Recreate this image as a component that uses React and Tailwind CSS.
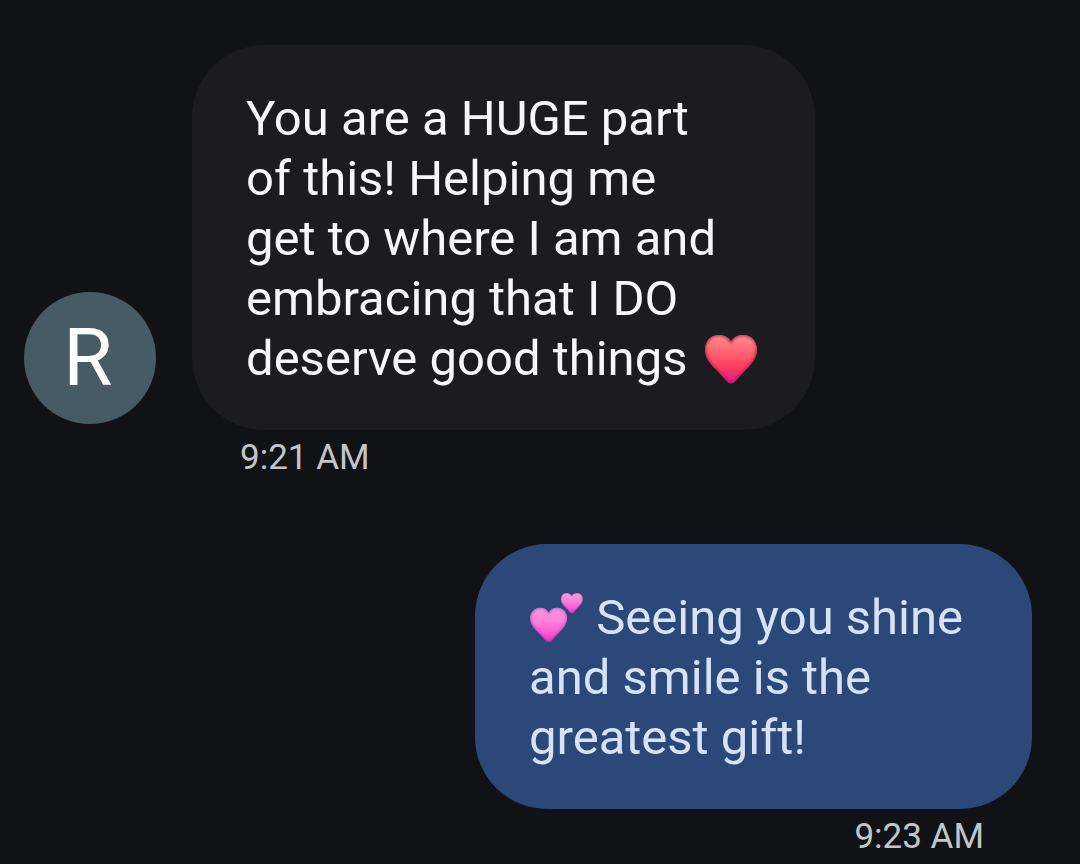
import React from "react";

const HEART =
  "M27 7.5C24 3 20 1 15 1C7 1 1 7 1 15.5C1 22.500 5 28.500 11 34.500C15.500 39 19.500 43.500 23 47.500C25.500 50 28.500 50 31 47.500C34.500 43.500 38.500 39 43 34.500C49 28.500 53 22.500 53 15.500C53 7 47 1 39 1C34 1 30 3 27 7.500Z";

// Glossy red heart, drawn inline with the message text
function RedHeart() {
  return (
    <svg
      role="img"
      aria-label="red heart"
      viewBox="0 0 54 56"
      className="-my-2 ml-1 inline-block h-[56px] w-[54px] align-middle"
    >
      <defs>
        <linearGradient id="red" x1="0" y1="0" x2="0" y2="1">
          <stop offset="0" stopColor="#ff908e" />
          <stop offset="0.3" stopColor="#ff6a76" />
          <stop offset="0.6" stopColor="#ff4460" />
          <stop offset="0.8" stopColor="#f42c70" />
          <stop offset="1" stopColor="#cc18a0" />
        </linearGradient>
        <clipPath id="redClip">
          <path d={HEART} />
        </clipPath>
        <filter id="redSoft">
          <feGaussianBlur stdDeviation="1.2" />
        </filter>
      </defs>
      <path d={HEART} fill="url(#red)" />
      <g clipPath="url(#redClip)">
        <path d={HEART} fill="none" stroke="#b8183f" strokeOpacity="0.7" strokeWidth="3" filter="url(#redSoft)" />
      </g>
    </svg>
  );
}

// Big pink heart with a small one at its upper right
function TwoHearts() {
  return (
    <svg
      role="img"
      aria-label="two hearts"
      viewBox="0 0 55 58"
      className="-my-2 inline-block h-[58px] w-[55px] align-middle"
    >
      <defs>
        <linearGradient id="pink" x1="0" y1="0" x2="0" y2="1">
          <stop offset="0" stopColor="#f09ae0" />
          <stop offset="0.4" stopColor="#ff80de" />
          <stop offset="0.75" stopColor="#ff58d2" />
          <stop offset="1" stopColor="#e82fbd" />
        </linearGradient>
        <clipPath id="pinkClip">
          <path d={HEART} />
        </clipPath>
        <filter id="pinkSoft">
          <feGaussianBlur stdDeviation="1.2" />
        </filter>
        <g id="pinkHeart">
          <path d={HEART} fill="url(#pink)" />
          <g clipPath="url(#pinkClip)">
            <path d={HEART} fill="none" stroke="#9a38b0" strokeOpacity="0.6" strokeWidth="3" filter="url(#pinkSoft)" />
          </g>
        </g>
      </defs>
      <use href="#pinkHeart" transform="translate(0.5 15) scale(0.71)" />
      <use href="#pinkHeart" transform="translate(31.500 0.500) scale(0.420)" />
    </svg>
  );
}

export default function App() {
  return (
    <main className="flex min-h-screen flex-col bg-[#111216] pt-[45px] font-['Roboto',sans-serif]">
      {/* Received message */}
      <div className="flex items-end gap-9 pl-6">
        <div className="mb-[6px] flex size-[132px] shrink-0 items-center justify-center rounded-full bg-[#475b65] pr-1 text-[80px] leading-none text-white">
          R
        </div>
        <p className="w-full max-w-[623px] rounded-[72px] bg-[#1c1b1f] px-[54px] pt-[44px] pb-[41px] text-[49px] leading-[60px] whitespace-nowrap text-[#f8f6fd]">
          You are a HUGE part
          <br />
          of this! Helping me
          <br />
          get to where I am and
          <br />
          embracing that I DO
          <br />
          deserve good things <RedHeart />
        </p>
      </div>
      <time className="mt-1 ml-60 text-[35px] leading-[48px] text-[#c4c5c9]">9:21 AM</time>

      {/* Sent message */}
      <div className="mt-[62px] flex flex-col items-end pr-12">
        <p className="w-full max-w-[557px] rounded-[72px] bg-[#2c4878] px-[54px] pt-[44px] pb-[41px] text-[49px] leading-[60px] whitespace-nowrap text-[#d5e3ff]">
          <TwoHearts /> Seeing you shine
          <br />
          and smile is the
          <br />
          greatest gift!
        </p>
        <time className="mt-1 mr-12 text-[35px] leading-[48px] text-[#c4c5c9]">9:23 AM</time>
      </div>
    </main>
  );
}
